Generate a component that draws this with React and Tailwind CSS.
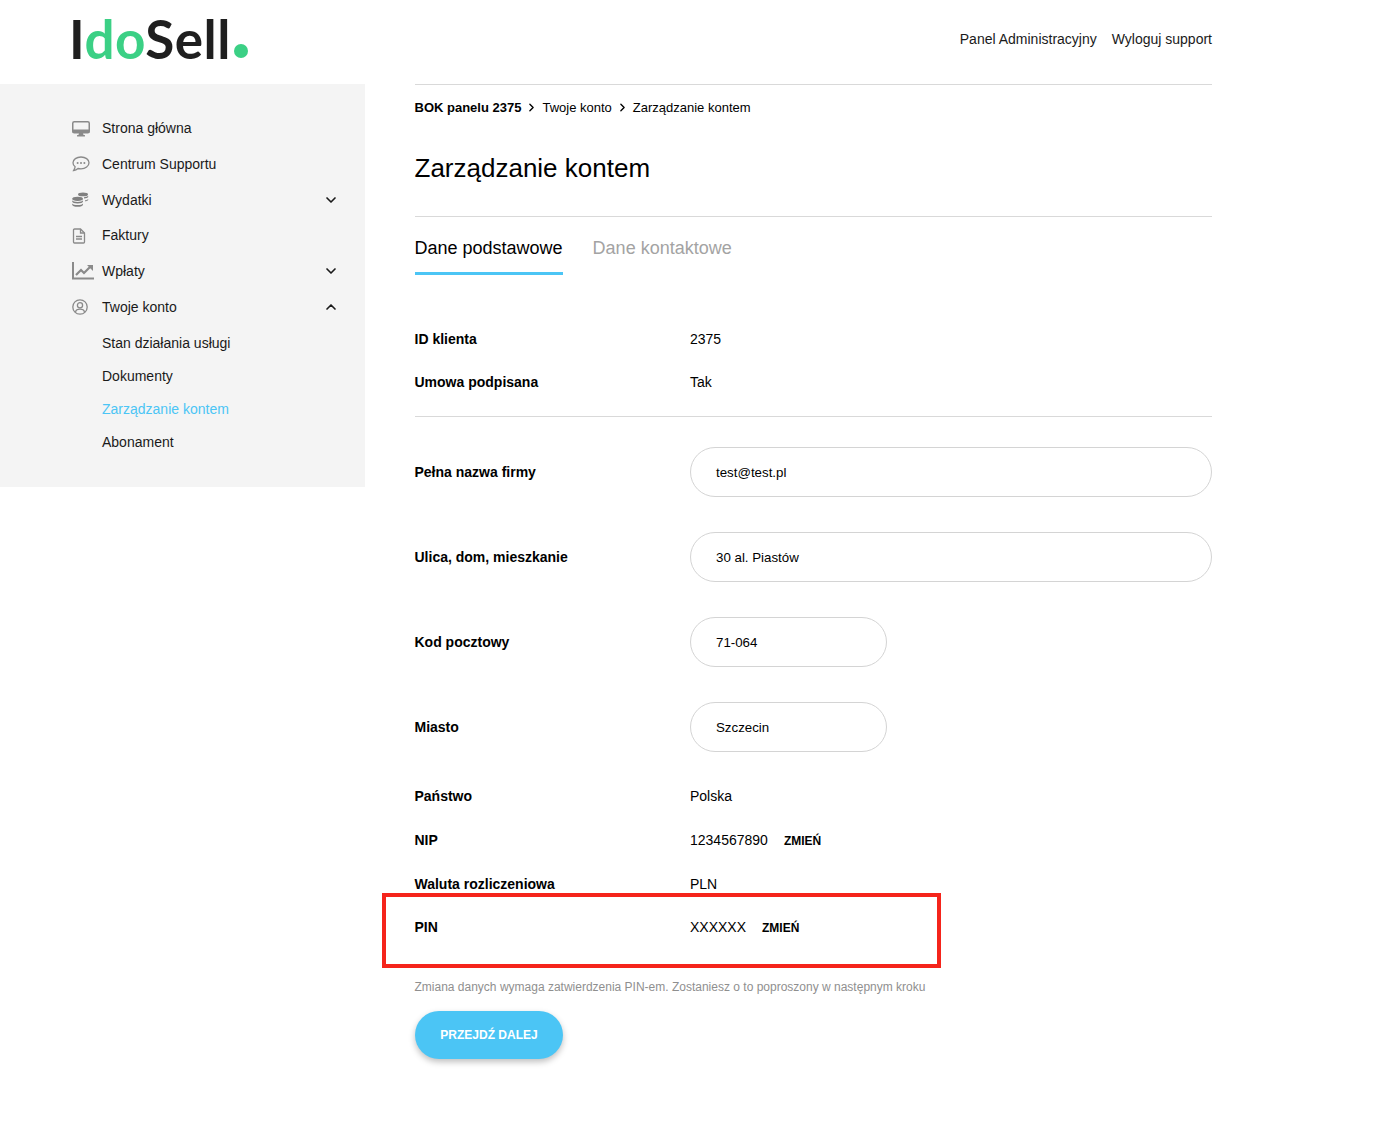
import React from 'react';
import { ChevronDown, ChevronUp, ChevronRight } from 'lucide-react';

const MonitorIcon = () => (
  <svg width="18" height="16" viewBox="0 0 18 16" fill="none">
    <rect x="0.75" y="0.75" width="16.5" height="11" rx="1.500" fill="#f4f4f4" stroke="#8a8a8a" strokeWidth="1.500" />
    <rect x="0.5" y="8.500" width="17" height="3.500" rx="1" fill="#8a8a8a" />
    <path d="M7 12h4l.6 2.200H6.400z" fill="#8a8a8a" />
    <rect x="5" y="14" width="8" height="1.600" rx=".5" fill="#8a8a8a" />
  </svg>
);

const ChatIcon = () => (
  <svg width="18" height="16" viewBox="0 0 18 16" fill="none">
    <path d="M9 1C4.600 1 1 3.400 1 6.800c0 1.600.8 3 2.100 4-.2 1.400-.8 2.500-1.500 3.700 1.800-.2 3.300-1 4.400-2 .9.2 1.900.3 3 .3 4.400 0 8-2.600 8-6S13.400 1 9 1z" stroke="#8a8a8a" strokeWidth="1.300" />
    <circle cx="5.600" cy="7" r="1" fill="#8a8a8a" />
    <circle cx="9" cy="7" r="1" fill="#8a8a8a" />
    <circle cx="12.400" cy="7" r="1" fill="#8a8a8a" />
  </svg>
);

const CoinsIcon = () => (
  <svg width="17" height="16" viewBox="0 0 17 16" fill="#808080">
    <ellipse cx="11" cy="2.400" rx="5" ry="1.900" />
    <path d="M12 5.200c2 0 3.600-.5 4.200-1.400v1.100c-.3.7-2 1.500-4.200 1.500z" />
    <path d="M13 8.200c1.600-.1 2.800-.6 3.200-1.300V8c-.3.7-1.600 1.200-3.200 1.300z" />
    <ellipse cx="5.600" cy="6.800" rx="5.400" ry="2.100" />
    <path d="M.2 8.200c.6 1 2.800 1.700 5.400 1.700s4.800-.7 5.400-1.700v1.300c0 1.100-2.400 2-5.400 2S.2 10.600.2 9.500z" />
    <path d="M.2 11.400c.6 1 2.800 1.700 5.400 1.700s4.800-.7 5.400-1.700v1.300c0 1.100-2.400 2.100-5.400 2.100S.2 13.800.2 12.700z" />
  </svg>
);

const FileIcon = () => (
  <svg width="14" height="16" viewBox="0 0 14 16" fill="none" stroke="#8a8a8a" strokeWidth="1.300">
    <path d="M2.500 1h6l4 4v9a1 1 0 0 1-1 1h-9a1 1 0 0 1-1-1V2a1 1 0 0 1 1-1z" />
    <path d="M8.500 1v4h4M4 8.500h6M4 11h6" />
  </svg>
);

const ChartIcon = () => (
  <svg width="22" height="18" viewBox="0 0 22 18" fill="none">
    <path d="M1 0v16.500h21" stroke="#8a8a8a" strokeWidth="2" />
    <path d="M4 13l5-5 3 3 6-6" stroke="#8a8a8a" strokeWidth="2.200" />
    <path d="M15 3h6v6z" fill="#8a8a8a" />
  </svg>
);

const UserIcon = () => (
  <svg width="16" height="16" viewBox="0 0 16 16" fill="none" stroke="#8a8a8a" strokeWidth="1.300">
    <circle cx="8" cy="8" r="7.200" />
    <circle cx="8" cy="6.300" r="2.600" />
    <path d="M3.500 13c.5-2 2-2.800 4.500-2.800s4 .8 4.500 2.800" />
  </svg>
);

const menu = [
  { label: 'Strona główna', icon: <MonitorIcon /> },
  { label: 'Centrum Supportu', icon: <ChatIcon /> },
  { label: 'Wydatki', icon: <CoinsIcon />, chevron: 'down' },
  { label: 'Faktury', icon: <FileIcon /> },
  { label: 'Wpłaty', icon: <ChartIcon />, chevron: 'down' },
  { label: 'Twoje konto', icon: <UserIcon />, chevron: 'up' },
];

const subMenu = [
  { label: 'Stan działania usługi' },
  { label: 'Dokumenty' },
  { label: 'Zarządzanie kontem', active: true },
  { label: 'Abonament' },
];

const Sidebar = () => (
  <aside className="w-[365px] h-[403px] bg-[#f4f4f4] pt-[26.850px] pl-[72px] pr-[26px] text-[14px] text-[#1a1a1a] shrink-0">
    {menu.map((item) => (
      <div key={item.label} className="flex items-center h-[35.700px]">
        <span className="w-[30px] flex items-center shrink-0">{item.icon}</span>
        <span className="flex-1">{item.label}</span>
        {item.chevron === 'down' && <ChevronDown size={16} strokeWidth={2.500} />}
        {item.chevron === 'up' && <ChevronUp size={16} strokeWidth={2.500} />}
      </div>
    ))}
    <div className="pl-[30px] pt-[2.500px]">
      {subMenu.map((item) => (
        <div key={item.label} className={`flex items-center h-[33px] ${item.active ? 'text-[#4bc5f5]' : ''}`}>
          {item.label}
        </div>
      ))}
    </div>
  </aside>
);

const Row = ({ label, className, children }) => (
  <div className={`flex items-center text-[14px] ${className}`}>
    <div className="w-[275.500px] font-bold shrink-0">{label}</div>
    <div className="flex items-center">{children}</div>
  </div>
);

const Change = ({ className }) => <span className={`text-[12px] font-bold pt-[1px] ${className}`}>ZMIEŃ</span>;

const Field = ({ label, value, narrow }) => (
  <Row label={label} className="h-[50px] mb-[35px]">
    <div className={`h-[50px] rounded-[25px] border border-[#d4d4d4] bg-white flex items-center pl-[25px] pt-[1px] text-[13.300px] ${narrow ? 'w-[197px]' : 'w-[522px]'}`}>
      {value}
    </div>
  </Row>
);

export default function App() {
  return (
    <div className="min-h-[1121px] bg-white text-black font-['Liberation_Sans',Arial,sans-serif] relative">
      <header className="h-[84px] flex">
        <div className="w-[414.500px] pl-[69px] pt-[7px] shrink-0 flex items-start font-['Lato',sans-serif] text-[53px] leading-[64px] font-bold tracking-[0.500px] text-[#1f1f1f]">
          <span>
            I<span className="text-[#3bd085]">do</span>Sell
          </span>
          <span className="w-[14px] h-[14px] rounded-full bg-[#3bd085] mt-[37px] ml-[3px] shrink-0" />
        </div>
        <div className="w-[797.500px] flex justify-end gap-[15px] text-[14px] pt-[29px] text-[#1a1a1a]">
          <span>Panel Administracyjny</span>
          <span>Wyloguj support</span>
        </div>
      </header>

      <div className="flex">
        <Sidebar />
        <main className="w-[797.500px] ml-[49.500px]">
          <div className="border-t border-[#d9d9d9] h-[47px] flex items-center text-[13px] pb-[1px]">
            <span className="font-bold">BOK panelu 2375</span>
            <ChevronRight size={13} strokeWidth={2.500} className="mx-[4px]" />
            <span>Twoje konto</span>
            <ChevronRight size={13} strokeWidth={2.500} className="mx-[4px]" />
            <span>Zarządzanie kontem</span>
          </div>
          <h1 className="text-[26px] leading-[30px] mt-[22px] mb-[33px]">Zarządzanie kontem</h1>

          <div className="border-t border-[#d9d9d9] flex gap-[30px] text-[18px] h-[58px] mb-[43px]">
            <div className="border-b-[3px] border-[#4bc5f5] pt-[21px] leading-[21px] h-[58px]">Dane podstawowe</div>
            <div className="text-[#a3a3a3] pt-[21px] leading-[21px]">Dane kontaktowe</div>
          </div>

          <Row label="ID klienta" className="h-[44px]">2375</Row>
          <Row label="Umowa podpisana" className="h-[42px]">Tak</Row>
          <div className="border-t border-[#d9d9d9] mt-[13px] mb-[30px]" />

          <Field label="Pełna nazwa firmy" value="test@test.pl" />
          <Field label="Ulica, dom, mieszkanie" value="30 al. Piastów" />
          <Field label="Kod pocztowy" value="71-064" narrow />
          <Field label="Miasto" value="Szczecin" narrow />

          <div className="-mt-[13px]">
            <Row label="Państwo" className="h-[44px]">Polska</Row>
            <Row label="NIP" className="h-[44px]">
              1234567890<Change className="ml-[16px]" />
            </Row>
            <Row label="Waluta rozliczeniowa" className="h-[44px]">PLN</Row>
            <Row label="PIN" className="h-[42px]">
              XXXXXX<Change className="ml-[16px]" />
            </Row>
          </div>

          <p className="text-[12px] leading-[14px] text-[#8f8f8f] mt-[32px]">
            Zmiana danych wymaga zatwierdzenia PIN-em. Zostaniesz o to poproszony w następnym kroku
          </p>
          <button className="mt-[17px] ml-[0.500px] w-[148px] h-[48px] rounded-[24px] bg-[#4bc5f5] text-white text-[12px] font-bold shadow-[0_3px_6px_rgba(0,0,0,0.25)]">
            PRZEJDŹ DALEJ
          </button>
        </main>
      </div>

      {/* red highlight drawn over the PIN row */}
      <div className="absolute left-[382px] top-[893px] w-[559px] h-[75px] border-[4px] border-[#f5241b]" />
    </div>
  );
}
